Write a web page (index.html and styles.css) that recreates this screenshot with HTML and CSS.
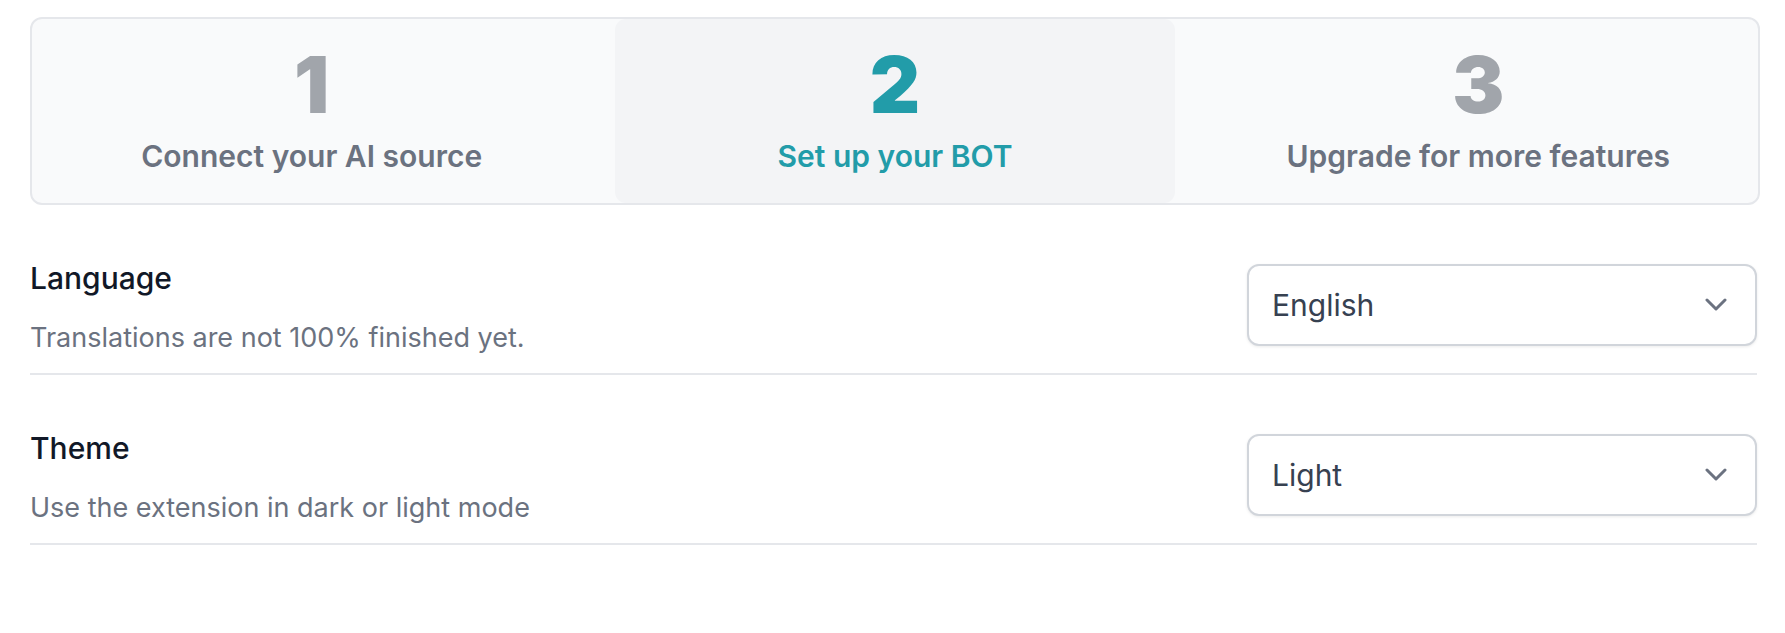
FILE: index.html
```html
<!DOCTYPE html>
<html lang="en">
<head>
<meta charset="utf-8">
<title>Setup</title>
<link rel="stylesheet" href="styles.css">
</head>
<body>
<main class="page">
  <nav class="stepper">
    <div class="step">
      <span class="step-num">1</span>
      <span class="step-label">Connect your AI source</span>
    </div>
    <div class="step step-active">
      <span class="step-num">2</span>
      <span class="step-label">Set up your BOT</span>
    </div>
    <div class="step">
      <span class="step-num">3</span>
      <span class="step-label">Upgrade for more features</span>
    </div>
  </nav>

  <section class="settings">
    <div class="row">
      <div class="row-text">
        <div class="row-title">Language</div>
        <div class="row-desc">Translations are not 100% finished yet.</div>
      </div>
      <div class="select">
        <span class="select-value">English</span>
        <svg class="chevron" width="22" height="14" viewBox="0 0 22 14" aria-hidden="true"><polyline points="2,2 11,11 20,2" fill="none" stroke="currentColor" stroke-width="3" stroke-linecap="round" stroke-linejoin="round"/></svg>
      </div>
    </div>
    <div class="row">
      <div class="row-text">
        <div class="row-title">Theme</div>
        <div class="row-desc">Use the extension in dark or light mode</div>
      </div>
      <div class="select">
        <span class="select-value">Light</span>
        <svg class="chevron" width="22" height="14" viewBox="0 0 22 14" aria-hidden="true"><polyline points="2,2 11,11 20,2" fill="none" stroke="currentColor" stroke-width="3" stroke-linecap="round" stroke-linejoin="round"/></svg>
      </div>
    </div>
  </section>
</main>
</body>
</html>
```

FILE: styles.css
```css
* { box-sizing: border-box; }

html, body {
  margin: 0;
  padding: 0;
  background: #ffffff;
}

body {
  font-family: Inter, "Noto Sans", "Liberation Sans", sans-serif;
  color: #111827;
}

.page {
  padding: 17px 25px 0 30px;
}

.stepper {
  display: grid;
  grid-template-columns: repeat(3, 1fr);
  column-gap: 24px;
  height: 188px;
  background: #f9fafb;
  border: 2px solid #e5e7eb;
  border-radius: 12px;
}

.step {
  display: flex;
  flex-direction: column;
  align-items: center;
  padding-top: 27px;
  border-radius: 11px;
  color: #6b7280;
}

.step-active {
  background: #f3f4f6;
  color: #229ca9;
}

.step-num {
  font-size: 78px;
  line-height: 77px;
  font-weight: 900;
  color: #a1a5ab;
}

.step-active .step-num {
  color: #229ca9;
}

.step-label {
  margin-top: 15px;
  font-size: 30px;
  line-height: 36px;
  font-weight: 600;
}

.settings {
  padding-right: 3px;
}

.row {
  display: flex;
  justify-content: space-between;
  align-items: flex-start;
  padding: 55px 0 17px;
  border-bottom: 2px solid #e5e7eb;
}

.row-title {
  font-size: 30px;
  line-height: 36px;
  font-weight: 500;
  color: #111827;
}

.row-desc {
  margin-top: 24px;
  font-size: 27px;
  line-height: 36px;
  color: #6b7280;
}

.select {
  margin-top: 4px;
  width: 510px;
  height: 82px;
  display: flex;
  align-items: center;
  justify-content: space-between;
  padding: 0 28px 0 23px;
  background: #ffffff;
  border: 2px solid #d1d5db;
  border-radius: 12px;
  box-shadow: 0 1px 3px rgba(0, 0, 0, 0.08);
}

.select-value {
  font-size: 30px;
  color: #374151;
}

.chevron {
  color: #6b7280;
}
```
